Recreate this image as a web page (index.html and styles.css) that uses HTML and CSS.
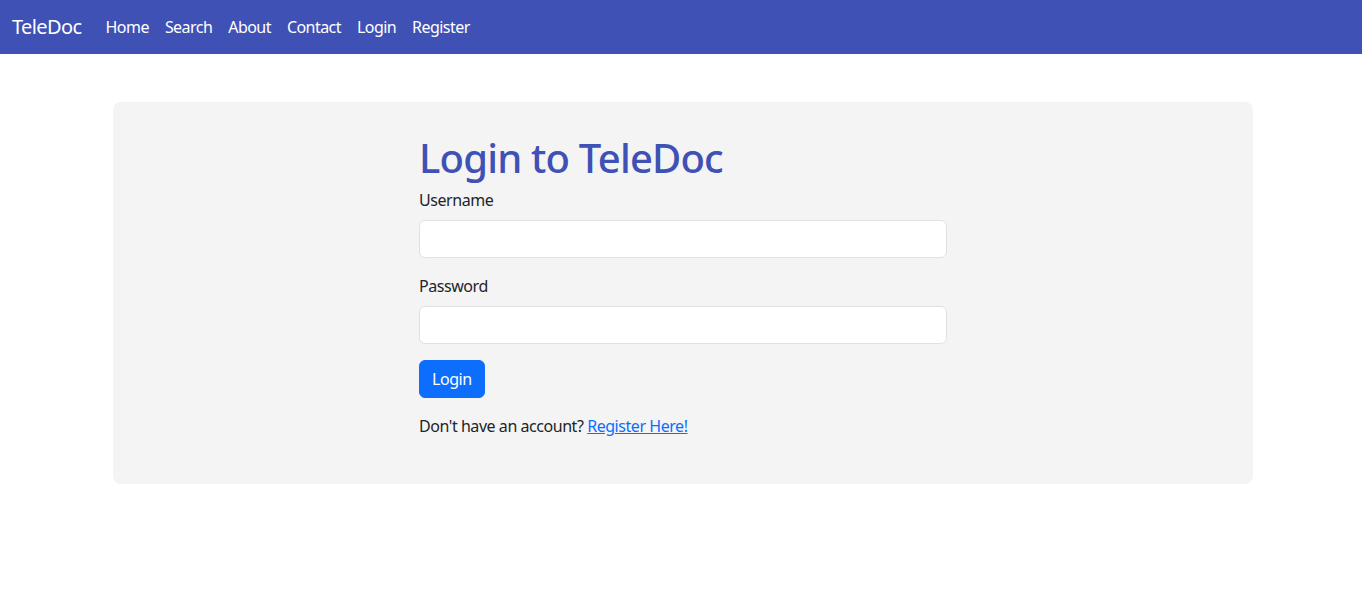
FILE: index.html
```html
<!DOCTYPE html>
<html lang="en">
<head>
<meta charset="utf-8">
<title>TeleDoc - Login</title>
<link rel="stylesheet" href="styles.css">
</head>
<body>
<nav class="navbar">
  <a class="brand" href="#">TeleDoc</a>
  <ul class="nav">
    <li><a class="nav-link" href="#">Home</a></li>
    <li><a class="nav-link" href="#">Search</a></li>
    <li><a class="nav-link" href="#">About</a></li>
    <li><a class="nav-link" href="#">Contact</a></li>
    <li><a class="nav-link" href="#">Login</a></li>
    <li><a class="nav-link" href="#">Register</a></li>
  </ul>
</nav>
<main class="page">
  <section class="card">
    <form class="login-form">
      <h1 class="title">Login to TeleDoc</h1>
      <div class="field">
        <label class="label" for="username">Username</label>
        <input class="input" id="username" type="text">
      </div>
      <div class="field">
        <label class="label" for="password">Password</label>
        <input class="input" id="password" type="password">
      </div>
      <button class="btn" type="button">Login</button>
      <p class="note">Don't have an account? <a class="link" href="#">Register Here!</a></p>
    </form>
  </section>
</main>
</body>
</html>
```
FILE: styles.css
```css
* { box-sizing: border-box; }
html, body { margin: 0; padding: 0; }
body {
  font-family: "Noto Sans", "Open Sans", sans-serif;
  font-size: 16px;
  line-height: 1.5;
  letter-spacing: -0.45px;
  color: #212529;
  background: #fff;
}
.navbar {
  height: 54px;
  background: #3f51b5;
  display: flex;
  align-items: center;
  padding: 0 12px;
}
.brand {
  color: #fff;
  text-decoration: none;
  font-size: 20px;
  letter-spacing: -0.6px;
  margin-right: 16px;
}
.nav {
  list-style: none;
  margin: 0;
  padding: 0;
  display: flex;
}
.nav-link {
  display: block;
  color: #fff;
  text-decoration: none;
  padding: 8px;
  letter-spacing: -0.55px;
}
.page {
  padding: 48px 0 0 113px;
}
.card {
  width: 1140px;
  background: #f4f4f4;
  border-radius: 8px;
  padding: 32px 0 46px 306px;
}
.login-form {
  width: 528px;
}
.title {
  margin: 0 0 6px;
  font-size: 40px;
  font-weight: 500;
  line-height: 1.2;
  letter-spacing: -0.8px;
  color: #3f51b5;
}
.field { margin-bottom: 16px; }
.label {
  display: block;
  margin-bottom: 8px;
}
.input {
  display: block;
  width: 100%;
  height: 38px;
  border: 1px solid #dee2e6;
  border-radius: 6px;
  background: #fff;
  font: inherit;
  padding: 6px 12px;
}
.btn {
  display: block;
  height: 38px;
  padding: 6px 12px;
  background: #0d6efd;
  color: #fff;
  border: 1px solid #0d6efd;
  border-radius: 6px;
  font: inherit;
  letter-spacing: -0.45px;
}
.note {
  margin: 16px 0 0;
}
.link { color: #0d6efd; }
```
